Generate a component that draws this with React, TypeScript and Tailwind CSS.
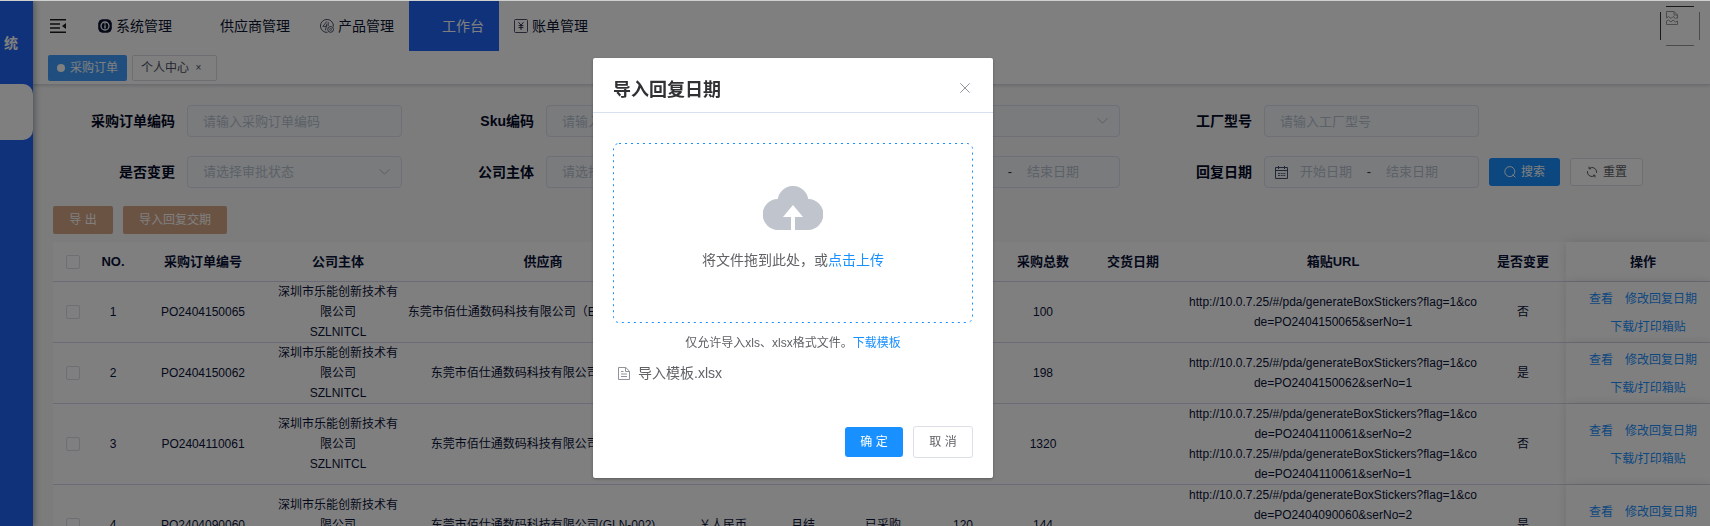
import { useState } from "react";
import type { ReactNode } from "react";

type Order = {
  no: number;
  code: string;
  supplier: string;
  ordered: number;
  total: number;
  urls: string[];
  changed: boolean;
};

const stickerUrl = (code: string, ser: number) =>
  `http://10.0.7.25/#/pda/generateBoxStickers?flag=1&code=${code}&serNo=${ser}`;

const ORDERS: Order[] = [
  {
    no: 1,
    code: "PO2404150065",
    supplier: "东莞市佰仕通数码科技有限公司（EMS-GLN-001）",
    ordered: 100,
    total: 100,
    urls: [stickerUrl("PO2404150065", 1)],
    changed: false,
  },
  {
    no: 2,
    code: "PO2404150062",
    supplier: "东莞市佰仕通数码科技有限公司(GLN-002)",
    ordered: 198,
    total: 198,
    urls: [stickerUrl("PO2404150062", 1)],
    changed: true,
  },
  {
    no: 3,
    code: "PO2404110061",
    supplier: "东莞市佰仕通数码科技有限公司(GLN-002)",
    ordered: 1200,
    total: 1320,
    urls: [stickerUrl("PO2404110061", 2), stickerUrl("PO2404110061", 1)],
    changed: false,
  },
  {
    no: 4,
    code: "PO2404090060",
    supplier: "东莞市佰仕通数码科技有限公司(GLN-002)",
    ordered: 120,
    total: 144,
    urls: [stickerUrl("PO2404090060", 2), stickerUrl("PO2404090060", 1)],
    changed: true,
  },
];

const COLUMNS = [
  { title: "NO.", width: "w-10" },
  { title: "采购订单编号", width: "w-[140px]" },
  { title: "公司主体", width: "w-[130px]" },
  { title: "供应商", width: "w-[280px]" },
  { title: "币种", width: "w-20" },
  { title: "结算方式", width: "w-20" },
  { title: "状态", width: "w-20" },
  { title: "采购数量", width: "w-20" },
  { title: "采购总数", width: "w-20" },
  { title: "交货日期", width: "w-[100px]" },
  { title: "箱贴URL", width: "w-[300px]" },
];

function FoldIcon() {
  return (
    <svg width="16" height="14" viewBox="0 0 16 14" fill="#1a1a1a">
      <path d="M0 0h16v1.6H0zM0 4.2h10v1.6H0zM0 8.2h10v1.6H0zM0 12.4h16V14H0zM16 4v6l-4-3z" />
    </svg>
  );
}

function InfoBadgeIcon() {
  return (
    <svg width="14" height="14" viewBox="0 0 14 14">
      <path
        d="M4 .3h6L12.6 1.4 13.8 4.2v5.6L12.6 12.6 10 13.7H4L1.4 12.6.2 9.8V4.2L1.4 1.4z"
        fill="#0a1230"
      />
      <circle cx="7" cy="7" r="4" fill="none" stroke="#fff" strokeWidth="1.3" />
      <path d="M6.3 4.3h1.4v1.3H6.3zM6.3 6.2h1.4v3.4H6.3z" fill="#fff" />
    </svg>
  );
}

function ProductIcon() {
  return (
    <svg width="14" height="14" viewBox="0 0 14 14" fill="none" stroke="#4a5068">
      <path d="M13.4 7.6A6.5 6.5 0 1 0 7.5 13.4" />
      <path d="M6.8 2.4 2.8 7.4h4.4M6.8 4.8 5.4 11.2M8.2 3v4" strokeWidth=".9" />
      <circle cx="10.6" cy="10.4" r="2.9" />
      <circle cx="10.6" cy="10.4" r="1" strokeWidth=".8" />
    </svg>
  );
}

function BillIcon() {
  return (
    <svg width="14" height="14" viewBox="0 0 14 14" fill="none" stroke="#4a5068">
      <rect x=".5" y=".5" width="13" height="13" rx="1" />
      <path d="M4.5 3.2 7 6.2l2.5-3M7 6.2V11M4.6 6.6h4.8M4.6 8.6h4.8" stroke="#1c2238" strokeWidth=".9" />
    </svg>
  );
}

function ChevronIcon() {
  return (
    <svg
      className="pointer-events-none absolute top-1/2 right-3 -translate-y-1/2"
      width="11"
      height="7"
      viewBox="0 0 11 7"
      fill="none"
      stroke="#b4bccc"
    >
      <path d="m.5.7 5 5 5-5" />
    </svg>
  );
}

function CalendarIcon() {
  return (
    <svg className="shrink-0" width="13" height="13" viewBox="0 0 13 13" fill="none" stroke="#44506a">
      <path d="M.5 1.5h12v11H.5zM.5 4.5h12M3.5 0v3M9.5 0v3" />
      <path d="M3 7.5h2M5.7 7.5h2M8.3 7.5h2M3 9.5h2M5.7 9.5h2M8.3 9.5h2" strokeWidth=".9" />
    </svg>
  );
}

function SearchIcon() {
  return (
    <svg width="12" height="12" viewBox="0 0 12 12" fill="none" stroke="currentColor">
      <circle cx="5.8" cy="5.6" r="5" />
      <path d="m8.6 8.6 2.8 2.8" />
    </svg>
  );
}

function RefreshIcon() {
  return (
    <svg width="12" height="12" viewBox="0 0 12 12" fill="none" stroke="currentColor">
      <path d="M3.2 2.4A4.6 4.6 0 0 1 10.6 6v1M8.8 9.6A4.6 4.6 0 0 1 1.4 6V5" />
      <path d="M3 .6v2.2h2.2M9 11.4V9.2H6.8" />
    </svg>
  );
}

function CloudUploadIcon() {
  return (
    <svg width="60" height="44" viewBox="0 0 60 44" fill="#c0c4cc">
      <path d="M28 44H15.5A15.5 15.5 0 0 1 14.7 13 15.5 15.5 0 0 1 45.3 13 15.5 15.5 0 0 1 44.5 44H32V31h8L30 19 20 31h8z" />
    </svg>
  );
}

function DocumentIcon() {
  return (
    <svg width="12" height="13" viewBox="0 0 12 13" fill="none" stroke="#909399">
      <path d="M.5.5h7.3l3.7 3.7v8.3H.5zM7.5.5v4h4" />
      <path d="M3 4.5h2.5M3 7h6M3 9.5h6" />
    </svg>
  );
}

function BrokenAvatar() {
  return (
    <svg width="40" height="40" viewBox="0 0 40 40" fill="none">
      <path d="M6 .5h28M.5 6v28" stroke="#333" />
      <path d="M6 39.5h28M39.5 6v28" stroke="#999" />
      <path
        d="M6.5 12V5.5h7.5l3.5 3.5v3.5M14 5.5V9h3.5M6.5 12l2-1.5 2.5 2 2-2 2.5 2 2-1M6.5 15v3.5h11V15l-2 1-2.5-2-2 2-2.5-2z"
        stroke="#999"
      />
    </svg>
  );
}

function NavItem({ icon, label, active }: { icon?: ReactNode; label: string; active?: boolean }) {
  return (
    <a
      href="#"
      className={
        active
          ? "flex h-[50px] items-center gap-1 bg-[#1e64f6] px-[15px] text-sm text-white"
          : "flex h-[50px] items-center gap-1 px-[15px] text-sm text-[#0a1230]"
      }
    >
      <span className="w-3.5">{icon}</span>
      {label}
    </a>
  );
}

function Field({ id, label, children }: { id: string; label: string; children: ReactNode }) {
  return (
    <div className="flex items-center">
      <label htmlFor={id} className="w-[134px] pr-3 text-right text-sm font-bold text-[#040a28]">
        {label}
      </label>
      <div className="relative w-[215px]">{children}</div>
    </div>
  );
}

const control =
  "h-8 w-full rounded border border-[#dcdfee] bg-[#f4f7fa] text-[13px] text-[#b8c2d0] placeholder:text-[#b8c2d0]";

function TextField({ id, label, placeholder }: { id: string; label: string; placeholder: string }) {
  return (
    <Field id={id} label={label}>
      <input id={id} type="text" placeholder={placeholder} className={`${control} px-[15px]`} />
    </Field>
  );
}

function SelectField({ id, label, placeholder }: { id: string; label: string; placeholder: string }) {
  return (
    <Field id={id} label={label}>
      <select id={id} className={`${control} appearance-none px-[15px]`}>
        <option>{placeholder}</option>
      </select>
      <ChevronIcon />
    </Field>
  );
}

function DateRangeField({ id, label }: { id: string; label: string }) {
  return (
    <Field id={id} label={label}>
      <div className={`${control} flex items-center px-2.5`}>
        <CalendarIcon />
        <input
          id={id}
          type="text"
          placeholder="开始日期"
          className="w-[76px] text-center placeholder:text-[#b8c2d0]"
        />
        <span className="w-2.5 text-center text-[#303133]">-</span>
        <input
          type="text"
          aria-label={`${label}结束`}
          placeholder="结束日期"
          className="w-[76px] text-center placeholder:text-[#b8c2d0]"
        />
      </div>
    </Field>
  );
}

function Checkbox({ label }: { label: string }) {
  return (
    <input
      type="checkbox"
      aria-label={label}
      className="mx-auto block size-3.5 appearance-none rounded-xs border border-[#dcdfe6] bg-white"
    />
  );
}

const th = "h-10 border-b border-[#d4d7ec] p-0 text-center text-[13px] font-bold";
const td = "border-b border-[#d4d7ec] p-0 text-center";
const fixedCell = "bg-white pl-2.5 shadow-[0_0_10px_rgba(0,0,0,0.12)]";

function OrderTable() {
  return (
    <table className="w-full table-fixed border-separate border-spacing-0 bg-white text-xs leading-5 text-[#0a1238]">
      <thead>
        <tr>
          <th className={`${th} w-10`}>
            <Checkbox label="全选" />
          </th>
          {COLUMNS.map((col) => (
            <th key={col.title} className={`${th} ${col.width}`}>
              {col.title}
            </th>
          ))}
          <th className={`${th} w-[83px] pr-[3px]`}>是否变更</th>
          <th className={`${th} ${fixedCell}`}>操作</th>
        </tr>
      </thead>
      <tbody>
        {ORDERS.map((order) => (
          <tr key={order.no}>
            <td className={td}>
              <Checkbox label={`选择 ${order.code}`} />
            </td>
            <td className={td}>{order.no}</td>
            <td className={td}>{order.code}</td>
            <td className={`${td} px-[5px]`}>
              深圳市乐能创新技术有限公司
              <br />
              SZLNITCL
            </td>
            <td className={`${td} whitespace-nowrap`}>{order.supplier}</td>
            <td className={td}>￥人民币</td>
            <td className={td}>月结</td>
            <td className={td}>已采购</td>
            <td className={td}>{order.ordered}</td>
            <td className={td}>{order.total}</td>
            <td className={td} />
            <td className={`${td} px-[3px] break-all`}>
              {order.urls.map((url) => (
                <div key={url}>{url}</div>
              ))}
            </td>
            <td className={`${td} pr-[3px]`}>{order.changed ? "是" : "否"}</td>
            <td className={`${td} ${fixedCell} pt-0.5 leading-7 text-[#1890ff]`}>
              <div className="flex justify-center gap-3">
                <a href="#">查看</a>
                <a href="#">修改回复日期</a>
              </div>
              <a href="#" className="ml-2.5">
                下载/打印箱贴
              </a>
            </td>
          </tr>
        ))}
      </tbody>
    </table>
  );
}

function ImportDialog({ onClose }: { onClose: () => void }) {
  return (
    <div className="fixed inset-0 top-px z-20 flex items-start justify-center bg-black/50 pt-[57px] pr-[124px]">
      <div
        role="dialog"
        aria-labelledby="dialog-title"
        className="w-[400px] rounded-xs bg-white text-[#606266] shadow-[0_1px_3px_rgba(0,0,0,0.3)]"
      >
        <div className="flex items-start justify-between border-b border-[#d8e0f2] px-5 pt-5 pb-2.5">
          <h2 id="dialog-title" className="text-lg leading-6 font-bold text-[#303133]">
            导入回复日期
          </h2>
          <button type="button" aria-label="关闭" className="px-[3px] py-[5px]" onClick={onClose}>
            <svg width="10" height="10" viewBox="0 0 10 10" stroke="#909399">
              <path d="m.3.3 9.4 9.4M9.7.3.3 9.7" />
            </svg>
          </button>
        </div>

        <div className="px-5 pt-[30px]">
          <div className="relative flex h-[180px] flex-col items-center rounded-md pt-[43px]">
            {/* short dashes with wide gaps, which a CSS dashed border can't do */}
            <svg className="pointer-events-none absolute inset-0 size-full" fill="none" stroke="#1890ff">
              <rect
                x=".5"
                y=".5"
                rx="5.5"
                strokeDasharray="2 4"
                className="h-[calc(100%-1px)] w-[calc(100%-1px)]"
              />
            </svg>
            <CloudUploadIcon />
            <p className="mt-5 text-sm">
              将文件拖到此处，或
              <button type="button" className="text-[#1890ff]">
                点击上传
              </button>
            </p>
          </div>
          <p className="mt-2.5 text-center text-xs leading-5">
            仅允许导入xls、xlsx格式文件。
            <a href="#" className="text-[#1890ff]">
              下载模板
            </a>
          </p>
          <div className="mt-2.5 flex items-center gap-2 pl-[5px] text-sm">
            <DocumentIcon />
            <span>导入模板.xlsx</span>
          </div>
        </div>

        <div className="flex items-center justify-end gap-2.5 px-5 pt-[43px] pb-5 text-xs">
          <button type="button" className="h-[30px] w-[58px] rounded-[3px] bg-[#1890ff] text-white">
            确 定
          </button>
          <button
            type="button"
            className="h-8 w-[60px] rounded-[3px] border border-[#dcdfe6] bg-white"
            onClick={onClose}
          >
            取 消
          </button>
        </div>
      </div>
    </div>
  );
}

export default function App() {
  const [open, setOpen] = useState(true);

  return (
    <div className="flex h-screen overflow-hidden border-t border-[#cfd0d0] bg-[#f8f8f8] font-['Liberation_Sans','Noto_Sans_CJK_SC',sans-serif]">
      <aside className="z-10 w-[33px] shrink-0 bg-[#1e64f6] shadow-[2px_0_6px_rgba(0,21,41,0.35)]">
        <div className="flex h-[83px] items-center pl-1 text-sm font-bold text-white">统</div>
        <div className="h-14 rounded-r-[10px] bg-white" />
      </aside>

      <div className="min-w-0 flex-1">
        <header className="border-b border-[#d8dce5] bg-white shadow-[0_1px_3px_rgba(0,0,0,0.12),0_0_3px_rgba(0,0,0,0.04)]">
          <div className="flex h-[50px] items-center">
            <button type="button" aria-label="折叠菜单" className="px-[17px]">
              <FoldIcon />
            </button>
            <nav className="flex flex-1">
              <NavItem icon={<InfoBadgeIcon />} label="系统管理" />
              <NavItem label="供应商管理" />
              <NavItem icon={<ProductIcon />} label="产品管理" />
              <NavItem label="工作台" active />
              <NavItem icon={<BillIcon />} label="账单管理" />
            </nav>
            <div className="pr-2.5">
              <BrokenAvatar />
            </div>
          </div>
          <div className="flex h-[33px] gap-[5px] pt-1 pl-[15px] text-xs">
            <a href="#" className="flex h-[26px] items-center gap-[5px] rounded-xs bg-[#409eff] px-[9px] text-white">
              <span className="size-2 rounded-full bg-white" />
              采购订单
            </a>
            <a
              href="#"
              className="flex h-[26px] items-center rounded-xs border border-[#d8dce5] bg-white px-2 text-[#495060]"
            >
              个人中心
              <span className="w-[19px] text-center text-[10px]">×</span>
            </a>
          </div>
        </header>

        <main className="pt-5 pl-5">
          <form className="flex flex-wrap items-center gap-x-2.5 gap-y-[19px]">
            <TextField id="order-code" label="采购订单编码" placeholder="请输入采购订单编码" />
            <TextField id="sku" label="Sku编码" placeholder="请输入Sku编码" />
            <SelectField id="supplier" label="供应商" placeholder="请选择" />
            <TextField id="factory-model" label="工厂型号" placeholder="请输入工厂型号" />
            <SelectField id="changed" label="是否变更" placeholder="请选择审批状态" />
            <SelectField id="company" label="公司主体" placeholder="请选择公司主体" />
            <DateRangeField id="delivery-date" label="交货日期" />
            <DateRangeField id="reply-date" label="回复日期" />
            <div className="flex items-center gap-2.5 text-xs">
              <button
                type="button"
                className="flex h-7 items-center gap-[5px] rounded-[3px] bg-[#1890ff] px-[15px] text-white"
              >
                <SearchIcon />
                搜索
              </button>
              <button
                type="button"
                className="flex h-7 items-center gap-[5px] rounded-[3px] border border-[#dcdfe6] bg-white px-[15px] text-[#606266]"
              >
                <RefreshIcon />
                重置
              </button>
            </div>
          </form>

          <div className="mt-[18px] flex gap-2.5 text-xs text-white">
            <button type="button" className="h-7 w-15 rounded-xs bg-[#d6a686]">
              导 出
            </button>
            <button type="button" className="h-7 rounded-xs bg-[#d6a686] px-4" onClick={() => setOpen(true)}>
              导入回复交期
            </button>
          </div>

          <div className="mt-2">
            <OrderTable />
          </div>
        </main>
      </div>

      {open && <ImportDialog onClose={() => setOpen(false)} />}
    </div>
  );
}
